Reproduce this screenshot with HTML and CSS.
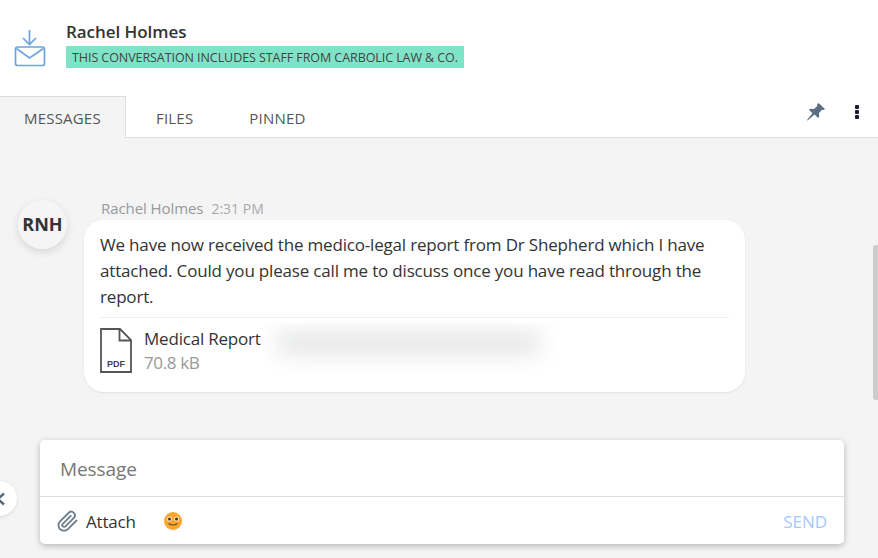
FILE: index.html
```html
<!DOCTYPE html>
<html lang="en">
<head>
<meta charset="utf-8">
<title>Conversation</title>
<link rel="stylesheet" href="styles.css">
</head>
<body>
<div class="app">
  <header class="head">
    <svg class="head-icon" width="32" height="38" viewBox="0 0 32 38" fill="none" stroke="#6fa3dc" stroke-width="1.700">
      <path d="M15.500 0v14M9 8l6.500 6.500L22 8"/>
      <rect x="1.500" y="17" width="29" height="18.500" rx="2"/>
      <path d="M2.500 18.500l13 9.500 14-9.500"/>
    </svg>
    <div class="head-text">
      <div class="name">Rachel Holmes</div>
      <div class="banner">THIS CONVERSATION INCLUDES STAFF FROM CARBOLIC LAW &amp; CO.</div>
    </div>
  </header>
  <nav class="tabs">
    <div class="tab active">MESSAGES</div>
    <div class="tab t-files">FILES</div>
    <div class="tab t-pinned">PINNED</div>
    <div class="tab-actions">
      <svg width="20" height="20" viewBox="0 0 20 20" fill="#5b6f82"><path d="M12.500 1l6.500 6-1.500 1-1.500-.3-3 3.300.2 3.800-1.200 1.200-3.300-3.400L1.500 18.500 1 18l5.500-6.800L3 8l1.200-1.200 3.800.2 3.300-3-.2-1.500z"/></svg>
      <div class="dots"><i></i><i></i><i></i></div>
    </div>
  </nav>
  <main class="thread">
    <div class="scrollbar"></div>
    <div class="msg">
      <div class="avatar">RNH</div>
      <div class="msg-body">
        <div class="meta"><span>Rachel Holmes</span><span class="time">2:31 PM</span></div>
        <div class="bubble">
          <p class="msg-text">We have now received the medico-legal report from Dr Shepherd which I have attached. Could you please call me to discuss once you have read through the report.</p>
          <div class="file">
            <svg class="pdf" width="32" height="45" viewBox="0 0 32 45" fill="none" stroke="#555" stroke-width="1.800">
              <path d="M1 1h19l11 11v32H1z"/>
              <path d="M19.500 1v11.500H31"/>
              <text x="16" y="39" text-anchor="middle" class="pdf-label">PDF</text>
            </svg>
            <div class="file-info">
              <div class="file-name">Medical Report</div>
              <div class="file-size">70.8 kB</div>
            </div>
            <div class="redact"><div class="redact-inner"></div></div>
          </div>
        </div>
      </div>
    </div>
    <div class="composer-row">
      <div class="collapse"><svg width="5" height="14" viewBox="0 0 5 14" fill="none" stroke="#55677a" stroke-width="2.400"><path d="M4 1.500L-2 7 4 12.500"/></svg></div>
      <div class="composer">
        <div class="input">Message</div>
        <div class="tools">
          <svg class="clip" width="24" height="24" viewBox="0 0 24 24" fill="none" stroke="#6c7e8e" stroke-width="1.800" stroke-linecap="round"><path d="M20.500 11.500l-8.600 8.600a5.500 5.500 0 0 1-7.800-7.800l8.800-8.800a3.700 3.700 0 0 1 5.200 5.200l-8.700 8.700a1.800 1.800 0 0 1-2.600-2.600l8-8"/></svg>
          <span class="attach">Attach</span>
          <svg class="emoji" width="18" height="18" viewBox="0 0 18 18"><circle cx="9" cy="9" r="9" fill="#f9a62e"/><circle cx="5.500" cy="7" r="2.500" fill="#fde3b8"/><circle cx="12.500" cy="7" r="2.500" fill="#fde3b8"/><circle cx="5.500" cy="7" r="1.500" fill="#4a3420"/><circle cx="12.500" cy="7" r="1.500" fill="#4a3420"/><path d="M4.500 11.500q4.500 3 9 0" fill="none" stroke="#6b4a20" stroke-width="1.200"/></svg>
          <span class="send">SEND</span>
        </div>
      </div>
    </div>
  </main>
</div>
</body>
</html>
```
FILE: styles.css
```css
* { box-sizing: border-box; }
html, body { margin: 0; padding: 0; height: 100%; }
body { font-family: "Open Sans", "Noto Sans", sans-serif; color: #333; background: #f4f4f4; overflow: hidden; }
.app { width: 878px; height: 558px; display: flex; flex-direction: column; }
.head { height: 96px; background: #fff; display: flex; padding: 21px 0 0 14px; gap: 20px; }
.head-icon { margin-top: 9px; flex: none; }
.head-text { display: flex; flex-direction: column; align-items: flex-start; }
.name { font-size: 17px; font-weight: 600; line-height: 22px; color: #333; letter-spacing: -.05px; }
.banner { margin-top: 3px; height: 22px; line-height: 24px; padding: 0 6px; background: #7fe3c7; font-size: 12.500px; color: #444; letter-spacing: -.07px; }
.tabs { height: 42px; background: #fff; border-bottom: 1px solid #ddd; display: flex; align-items: stretch; position: relative; }
.tab { font-size: 15px; line-height: 44px; color: #555; letter-spacing: .2px; }
.tab.active { width: 126px; height: 42px; background: #f4f4f4; border-top: 1px solid #ddd; border-right: 1px solid #ddd; padding-left: 24px; line-height: 43px; }
.t-files { margin-left: 30px; }
.t-pinned { margin-left: 56px; }
.tab-actions { margin-left: auto; display: flex; align-items: center; gap: 29px; padding: 0 19px 10px 0; }
.dots { display: flex; flex-direction: column; gap: 1px; }
.dots i { width: 4px; height: 4px; background: #1c1c30; border-radius: 1px; display: block; }
.thread { flex: 1; position: relative; padding-top: 61px; display: flex; flex-direction: column; }
.scrollbar { position: absolute; right: 0; top: 107px; width: 5px; height: 155px; background: #ccc; border-radius: 3px 0 0 3px; }
.msg { display: flex; padding-left: 18px; gap: 17px; }
.avatar { width: 49px; height: 49px; margin-top: 1px; border-radius: 50%; background: #f5f5f5; box-shadow: 0 3px 8px rgba(0,0,0,.12); font-weight: 700; font-size: 18px; line-height: 49px; text-align: center; color: #333; flex: none; }
.msg-body { width: 661px; }
.meta { font-size: 15px; line-height: 18px; color: #999; padding-left: 17px; margin-bottom: 2px; letter-spacing: -.08px; }
.time { margin-left: 8px; font-size: 14px; color: #aaa; letter-spacing: 0; }
.bubble { background: #fff; border-radius: 20px; box-shadow: 0 1px 2px rgba(0,0,0,.08); padding: 12px 16px 16px; }
.msg-text { margin: 0; font-size: 17px; line-height: 26px; color: #333; letter-spacing: -.18px; }
.file { border-top: 1px solid #eee; margin-top: 7px; padding-top: 10px; display: flex; position: relative; }
.pdf { flex: none; }
.pdf-label { font-family: "Liberation Sans", sans-serif; font-size: 9px; font-weight: 700; fill: #444; stroke: none; }
.file-info { margin: -1px 0 1px 12px; }
.file-name { font-size: 17px; line-height: 24px; color: #333; letter-spacing: -.2px; }
.file-size { font-size: 17px; line-height: 24px; color: #999; letter-spacing: -.35px; }
.redact { position: absolute; left: 164px; top: 5px; width: 295px; height: 47px; overflow: hidden; }
.redact-inner { position: absolute; left: 14px; top: 9px; width: 262px; height: 22px; background: #e3e4e4; filter: blur(11px); }
.composer-row { position: absolute; left: 0; right: 0; top: 302px; }
.collapse { position: absolute; left: -18px; top: 41px; width: 35px; height: 35px; border-radius: 50%; background: #fff; box-shadow: 0 1px 3px rgba(0,0,0,.12); display: flex; align-items: center; justify-content: flex-start; padding-left: 18px; }
.composer { margin-left: 40px; width: 804px; height: 104px; background: #fff; border-radius: 5px; box-shadow: 0 2px 6px rgba(0,0,0,.25); display: flex; flex-direction: column; }
.input { height: 57px; border-bottom: 1px solid #ddd; padding-left: 20px; font-size: 19px; line-height: 58px; color: #777; letter-spacing: -.1px; }
.tools { flex: 1; display: flex; align-items: center; padding: 1px 17px 0 16px; }
.clip { flex: none; }
.attach { margin-left: 6px; font-size: 17px; color: #333; letter-spacing: -.2px; }
.emoji { margin-left: 28px; }
.send { margin-left: auto; font-size: 17px; color: #a6c8ff; letter-spacing: -.05px; }
```
